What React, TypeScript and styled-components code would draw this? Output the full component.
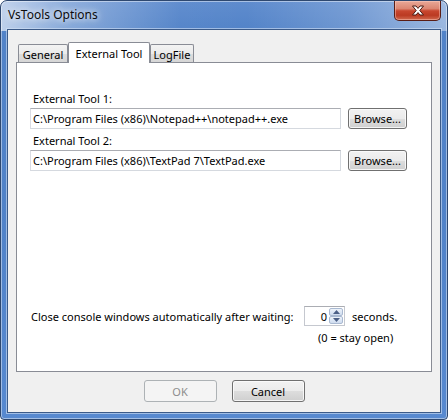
import React from "react";
import styled, { createGlobalStyle } from "styled-components";

const GlobalStyle = createGlobalStyle`
  html, body { margin: 0; padding: 0; background: #ffffff; }
  body {
    font-family: "Noto Sans", "Segoe UI", sans-serif;
    font-size: 11px;
    color: #000000;
  }
`;

const Window = styled.div`
  width: 448px;
  height: 420px;
  box-sizing: border-box;
  border: 1px solid #2e4870;
  border-radius: 7px 7px 4px 4px;
  padding: 0 6px 6px 6px;
  display: flex;
  flex-direction: column;
  overflow: hidden;
  box-shadow: inset 0 0 0 1px rgba(255, 255, 255, 0.45);
  background:
    linear-gradient(
        to right,
        rgba(255, 255, 255, 0.62) 0%,
        rgba(255, 255, 255, 0.32) 14%,
        rgba(255, 255, 255, 0.02) 40%,
        rgba(255, 255, 255, 0) 55%,
        rgba(255, 255, 255, 0.16) 78%,
        rgba(255, 255, 255, 0.42) 100%
      )
      top / 100% 30px no-repeat,
    linear-gradient(to bottom, #5f8cce 0px, #5283c8 30px, #5082c8 200px, #5789d0 100%);
`;

const TitleBar = styled.div`
  height: 28px;
  flex: none;
  display: flex;
  justify-content: space-between;
  align-items: flex-start;
`;

const Title = styled.div`
  margin: 6px 0 0 1px;
  font-size: 12px;
  line-height: 16px;
  color: #0b0b0b;
  text-shadow: 0 0 6px rgba(255, 255, 255, 0.95), 0 0 10px rgba(255, 255, 255, 0.7);
`;

const CloseButton = styled.div`
  width: 47px;
  height: 20px;
  box-sizing: border-box;
  border: 1px solid #5a1d15;
  border-top: none;
  border-radius: 0 0 5px 5px;
  display: flex;
  align-items: center;
  justify-content: center;
  background: linear-gradient(
    to bottom,
    #e9a898 0%,
    #dc8672 40%,
    #c8472f 52%,
    #bb3a22 75%,
    #d16a4f 100%
  );
  box-shadow: inset 0 0 0 1px rgba(255, 210, 200, 0.45);
`;

const Client = styled.div`
  flex: 1;
  box-sizing: border-box;
  border: 1px solid #3b5a88;
  background: #f0f0f0;
  padding: 12px 8px 0 8px;
  display: flex;
  flex-direction: column;
  box-shadow: 0 0 0 1px rgba(210, 225, 245, 0.6);
`;

const TabStrip = styled.div`
  height: 20px;
  display: flex;
  align-items: flex-end;
  padding-left: 2px;
`;

const Tab = styled.div<{ $w: number; $active?: boolean }>`
  width: ${(p) => p.$w}px;
  height: ${(p) => (p.$active ? 21 : 18)}px;
  margin-bottom: ${(p) => (p.$active ? -1 : 0)}px;
  box-sizing: border-box;
  border: 1px solid #898c95;
  border-bottom: none;
  border-radius: 2px 2px 0 0;
  position: relative;
  z-index: ${(p) => (p.$active ? 1 : 0)};
  display: flex;
  justify-content: center;
  align-items: ${(p) => (p.$active ? "flex-start" : "center")};
  padding-top: ${(p) => (p.$active ? 3 : 1)}px;
  line-height: 15px;
  background: ${(p) =>
    p.$active
      ? "#ffffff"
      : "linear-gradient(to bottom, #f3f3f3 0%, #ebebeb 50%, #dddddd 51%, #d6d6d6 100%)"};
`;

const Panel = styled.div`
  height: 310px;
  box-sizing: border-box;
  border: 1px solid #898c95;
  background: #ffffff;
  padding: 0 24px 26px 13px;
  display: flex;
  flex-direction: column;
`;

const FieldLabel = styled.div<{ $top: number }>`
  margin-top: ${(p) => p.$top}px;
  margin-bottom: 2px;
  padding-left: 3px;
  line-height: 15px;
`;

const FieldRow = styled.div`
  display: flex;
  gap: 7px;
  height: 21px;
`;

const TextBox = styled.div`
  flex: 1;
  box-sizing: border-box;
  border: 1px solid #d5d9df;
  border-top-color: #abadb3;
  border-left-color: #dadce3;
  padding-left: 2px;
  display: flex;
  align-items: center;
  white-space: nowrap;
  overflow: hidden;
  background: #ffffff;
`;

const Button = styled.div<{ $w: number; $h: number; $disabled?: boolean }>`
  width: ${(p) => p.$w}px;
  height: ${(p) => p.$h}px;
  box-sizing: border-box;
  flex: none;
  border: 1px solid ${(p) => (p.$disabled ? "#adb2b5" : "#707070")};
  border-radius: 3px;
  display: flex;
  align-items: center;
  justify-content: center;
  color: ${(p) => (p.$disabled ? "#8d8d8d" : "#000000")};
  background: ${(p) =>
    p.$disabled
      ? "#f4f4f4"
      : "linear-gradient(to bottom, #f2f2f2 0%, #ebebeb 50%, #dddddd 51%, #cfcfcf 100%)"};
  box-shadow: ${(p) => (p.$disabled ? "none" : "inset 0 0 0 1px rgba(252, 252, 252, 0.85)")};
`;

const Spacer = styled.div`
  flex: 1;
`;

const WaitGrid = styled.div`
  display: grid;
  grid-template-columns: 274px 41px auto;
  grid-template-rows: 20px 15px;
  row-gap: 4px;
  align-items: center;
`;

const WaitLabel = styled.div`
  padding-left: 1px;
  line-height: 15px;
`;

const Spinner = styled.div`
  height: 20px;
  box-sizing: border-box;
  border: 1px solid #c5c8cf;
  border-top-color: #abadb3;
  display: flex;
  align-items: stretch;
  background: #ffffff;
`;

const SpinValue = styled.div`
  flex: 1;
  display: flex;
  align-items: center;
  justify-content: flex-end;
  padding-right: 2px;
`;

const SpinArrows = styled.div`
  width: 15px;
  display: flex;
  flex-direction: column;
  padding: 1px 1px 1px 0;
  box-sizing: border-box;
`;

const SpinArrow = styled.div`
  flex: 1;
  box-sizing: border-box;
  border: 1px solid #a9b9d1;
  border-radius: 2px;
  display: flex;
  align-items: center;
  justify-content: center;
  background: linear-gradient(to bottom, #eef3fa 0%, #dde7f5 50%, #cfdcef 100%);
`;

const Seconds = styled.div`
  margin-left: 7px;
  line-height: 15px;
`;

const StayOpen = styled.div`
  grid-column: 2 / 4;
  margin-left: 14px;
  line-height: 15px;
`;

const ButtonRow = styled.div`
  margin-top: 8px;
  display: flex;
  justify-content: center;
  gap: 15px;
`;

const CloseGlyph = () => (
  <svg width="14" height="11" viewBox="0 0 14 11">
    <path
      d="M1.5 1 L5 1 L7 3.4 L9 1 L12.5 1 L8.8 5.5 L12.5 10 L9 10 L7 7.6 L5 10 L1.5 10 L5.2 5.5 Z"
      fill="#ffffff"
      stroke="#4a1a12"
      strokeWidth="1"
      strokeLinejoin="round"
    />
  </svg>
);

const Arrow = ({ up }: { up?: boolean }) => (
  <svg width="7" height="4" viewBox="0 0 7 4">
    <path d={up ? "M0 4 L3.5 0 L7 4 Z" : "M0 0 L7 0 L3.5 4 Z"} fill="#4b5f86" />
  </svg>
);

export default function App() {
  return (
    <>
      <GlobalStyle />
      <Window>
        <TitleBar>
          <Title>VsTools Options</Title>
          <CloseButton>
            <CloseGlyph />
          </CloseButton>
        </TitleBar>
        <Client>
          <TabStrip>
            <Tab $w={50}>General</Tab>
            <Tab $w={82} $active>
              External Tool
            </Tab>
            <Tab $w={44}>LogFile</Tab>
          </TabStrip>
          <Panel>
            <FieldLabel $top={28}>External Tool 1:</FieldLabel>
            <FieldRow>
              <TextBox>C:\Program Files (x86)\Notepad++\notepad++.exe</TextBox>
              <Button $w={59} $h={21}>
                Browse...
              </Button>
            </FieldRow>
            <FieldLabel $top={4}>External Tool 2:</FieldLabel>
            <FieldRow>
              <TextBox>C:\Program Files (x86)\TextPad 7\TextPad.exe</TextBox>
              <Button $w={59} $h={21}>
                Browse...
              </Button>
            </FieldRow>
            <Spacer />
            <WaitGrid>
              <WaitLabel>Close console windows automatically after waiting:</WaitLabel>
              <Spinner>
                <SpinValue>0</SpinValue>
                <SpinArrows>
                  <SpinArrow>
                    <Arrow up />
                  </SpinArrow>
                  <SpinArrow>
                    <Arrow />
                  </SpinArrow>
                </SpinArrows>
              </Spinner>
              <Seconds>seconds.</Seconds>
              <StayOpen>(0 = stay open)</StayOpen>
            </WaitGrid>
          </Panel>
          <ButtonRow>
            <Button $w={73} $h={22} $disabled>
              OK
            </Button>
            <Button $w={73} $h={22}>
              Cancel
            </Button>
          </ButtonRow>
        </Client>
      </Window>
    </>
  );
}
